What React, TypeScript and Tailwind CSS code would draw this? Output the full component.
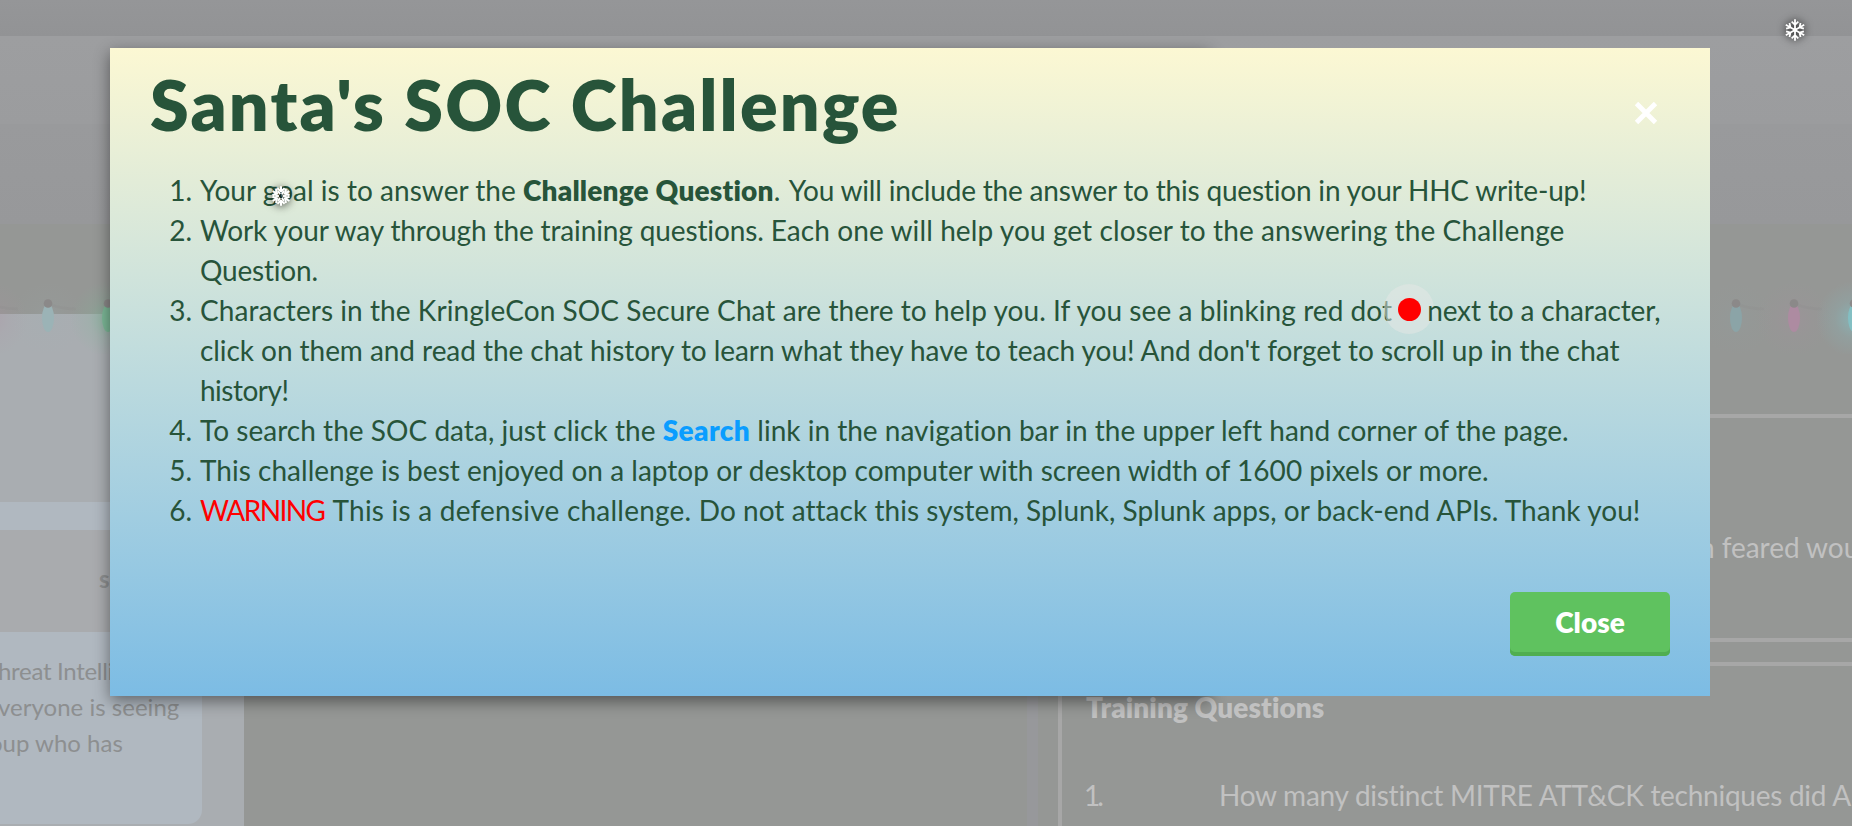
import type { ReactNode } from "react";

function Item({ n, children }: { n: number; children: ReactNode }) {
  return (
    <li className="flex whitespace-nowrap">
      <span className="w-[53px] shrink-0 pr-0.5 text-right">{n}.</span>
      <div className="ml-[6px]">{children}</div>
    </li>
  );
}

function Bulb({ x, color, glow, strength }: { x: number; color: string; glow: string; strength: number }) {
  return (
    <g>
      <defs>
        <radialGradient id={glow}>
          <stop offset="0" stopColor={color} stopOpacity={strength} />
          <stop offset="0.5" stopColor={color} stopOpacity={strength * 0.3} />
          <stop offset="1" stopColor={color} stopOpacity="0" />
        </radialGradient>
      </defs>
      <circle cx={x} cy="45" r="38" fill={`url(#${glow})`} />
      <path d={`M${x} 30q14 5 28 5`} fill="none" stroke="#8f8e8d" strokeWidth="2.500" opacity="0.3" />
      <ellipse cx={x} cy="44" rx="6" ry="14" fill={color} />
      <circle cx={x} cy="29.500" r="4.300" fill="#8b8989" />
    </g>
  );
}

function Snowflake() {
  return (
    <svg viewBox="-11.500 -11.500 23 23" className="size-6 overflow-visible drop-shadow-[0_0_4px_rgba(0,0,0,0.85)]">
      {[0, 60, 120, 180, 240, 300].map((a) => (
        <path key={a} transform={`rotate(${a})`} d="M0 0V-10.200M-3.200 -8L0 -5L3.200 -8" stroke="#fff" strokeWidth="1.700" fill="none" />
      ))}
      <circle r="2" fill="#fff" />
    </svg>
  );
}

function HeavySnowflake() {
  return (
    <svg viewBox="-12 -12 24 24" className="size-6 overflow-visible drop-shadow-[0_1px_4px_rgba(0,0,0,0.8)]">
      {[0, 60, 120, 180, 240, 300].map((a) => (
        <g key={a} transform={`rotate(${a})`}>
          <path d="M-3.600 -7.800L0 -4.600L3.600 -7.800M0 -4.600V-9.700" stroke="#fff" strokeWidth="2" fill="none" />
          <path d="M-2.800 -4.800L-1 -1.800M2.800 -4.800L1 -1.800" stroke="#fff" strokeWidth="1.500" fill="none" />
        </g>
      ))}
    </svg>
  );
}

function Page() {
  return (
    <div className="flex h-full flex-col">
      <div className="h-9 shrink-0 bg-linear-to-b from-[#959698] to-[#929395]" />
      <div className="h-[88px] shrink-0 bg-linear-to-b from-[#9d9ea0] to-[#9b9c9e]" />
      <div className="h-[100px] shrink-0 bg-linear-to-b from-[#999a9c] to-[#97989a]" />
      <div className="h-[90px] shrink-0 bg-[#959795]" />
      <div className="flex min-h-0 flex-1">
        <aside className="flex w-[244px] flex-col bg-[#a9adb1] text-2xl leading-9 text-[#8d8f90]">
          <div className="mt-[188px] h-7 bg-[#b0b8c0]" />
          <div className="flex h-[102px] items-start bg-[#a9abae] pt-[31px]">
            <b className="ml-[99px]">s</b>
          </div>
          <div className="h-[192px] w-[202px] overflow-hidden whitespace-nowrap rounded-br-[14px] bg-[#b0b8c0] pt-[21px]">
            <p className="-ml-[2px] tracking-[-0.3px]">hreat Intelli</p>
            <p className="-ml-[2px] tracking-[0.02px]">veryone is seeing</p>
            <p className="-ml-[11px]">oup who has</p>
          </div>
        </aside>
        <div className="w-[783px] bg-[#959795]" />
        <div className="w-[11px] bg-[#97989b]" />
        <main className="flex-1 overflow-hidden whitespace-nowrap bg-[#959795] pl-5 text-[28px] leading-10 text-[#c1c1c1]">
          <section className="mt-[100px] h-[228px] w-[830px] border-4 border-[#a7a7a7] pt-[109px]">
            <p className="ml-[637px] tracking-[-0.05px]">n feared wou</p>
          </section>
          <section className="mt-5 h-[260px] w-[830px] border-4 border-[#a7a7a7] pl-6 pt-[21px]">
            <h2 className="font-extrabold tracking-[0.08px]">Training Questions</h2>
            <div className="mt-[48px] flex">
              <span className="-ml-0.5 w-[135px] tracking-[-3px]">1.</span>
              <p className="tracking-[-0.27px]">How many distinct MITRE ATT&amp;CK techniques did A</p>
            </div>
          </section>
        </main>
      </div>
    </div>
  );
}

export default function App() {
  return (
    <div className="relative h-[826px] w-[1852px] overflow-hidden bg-[#959795] font-['Lato',sans-serif] [font-variant-ligatures:none]">
      <Page />
      <svg className="absolute left-0 top-[274px] h-20 w-[1852px]" viewBox="0 0 1852 80">
        <Bulb x={-10} color="#b08fa3" glow="g0" strength={0.35} />
        <Bulb x={48} color="#9bb3b6" glow="g1" strength={0.15} />
        <Bulb x={108} color="#7cb897" glow="g2" strength={0.6} />
        <Bulb x={1736} color="#8ba4a7" glow="g3" strength={0.15} />
        <Bulb x={1794} color="#ad8ba1" glow="g4" strength={0.25} />
        <Bulb x={1854} color="#83bfc3" glow="g5" strength={0.65} />
      </svg>
      <div className="absolute left-[110px] top-12 h-[648px] w-[1100px] shadow-[0_5px_15px_rgba(0,0,0,0.45)]">
        <div role="dialog" className="flex h-full w-[1600px] flex-col bg-linear-to-b from-[#fcf8d3] to-[#7cbce4] px-10 text-[#27543a]">
          <header className="flex h-[122px] shrink-0 justify-between">
            <h1 className="pt-[14px] text-[70px] font-extrabold leading-[84px] tracking-[2.15px]">Santa's SOC Challenge</h1>
            <button aria-label="Close dialog" className="mr-3 mt-[53px] size-6">
              <svg viewBox="0 0 24 24" className="size-6">
                <path d="M2.500 2.500L21.500 21.500M21.500 2.500L2.500 21.500" stroke="#fff" strokeWidth="4.800" />
              </svg>
            </button>
          </header>
          <ol className="-ml-[9px] text-[28px] leading-10">
            <Item n={1}>
              <span className="tracking-[0.03px]">Your goal is to answer the </span>
              <b className="font-extrabold tracking-[0.18px]">Challenge Question</b>
              <span className="tracking-[0.7px]">. </span>
              <span className="tracking-[-0.19px]">You will include the answer to this question in your HHC write-up!</span>
            </Item>
            <Item n={2}>
              <p>
                <span className="tracking-[-0.13px]">Work your way through the training questions. </span>
                <span className="tracking-[0.1px]">Each one will help you get closer to the answering the Challenge</span>
              </p>
              <p className="tracking-[-0.2px]">Question.</p>
            </Item>
            <Item n={3}>
              <p className="flex">
                <span className="tracking-[0.06px]">Characters in the KringleCon SOC Secure Chat are there to help you. If you see a blinking red dot</span>
                <span className="-mt-[6px] -mb-1 -ml-2 flex size-[50px] shrink-0 items-center justify-center rounded-full bg-[#e6e8e6]/50">
                  <span className="size-[23px] rounded-full bg-[#ff0000]" />
                </span>
                <span className="-ml-[7px] tracking-[-0.13px]">next to a character,</span>
              </p>
              <p className="tracking-[-0.06px]">click on them and read the chat history to learn what they have to teach you! And don't forget to scroll up in the chat</p>
              <p className="tracking-[-0.5px]">history!</p>
            </Item>
            <Item n={4}>
              <span className="tracking-[0.03px]">To search the SOC data, just click the </span>
              <b className="font-extrabold tracking-[0.4px] text-[#0a9dff]">Search</b> link in the navigation bar in the upper left hand corner of the page.
            </Item>
            <Item n={5}>
              <span className="tracking-[0.02px]">This challenge is best enjoyed on a laptop or desktop computer with screen width of 1600 pixels or more.</span>
            </Item>
            <Item n={6}>
              <span className="tracking-[-1.55px] text-[#ff0000]">WARNING</span>
              <span className="ml-[1.500px] tracking-[0.22px]"> This is a defensive challenge. </span>
              <span className="tracking-[0.04px]">Do not attack this system, Splunk, Splunk apps, or back-end APIs. Thank you!</span>
            </Item>
          </ol>
          <footer className="mt-[62px] flex justify-end">
            <button className="h-16 w-40 rounded-[5px] bg-[#5fc25f] pb-1 text-[28px] font-extrabold leading-10 text-white shadow-[inset_0_-4px_0_#50ae50]">Close</button>
          </footer>
        </div>
      </div>
      <div className="absolute left-[269px] top-[184px]"><HeavySnowflake /></div>
      <div className="absolute left-[1783px] top-[18px]"><Snowflake /></div>
    </div>
  );
}
